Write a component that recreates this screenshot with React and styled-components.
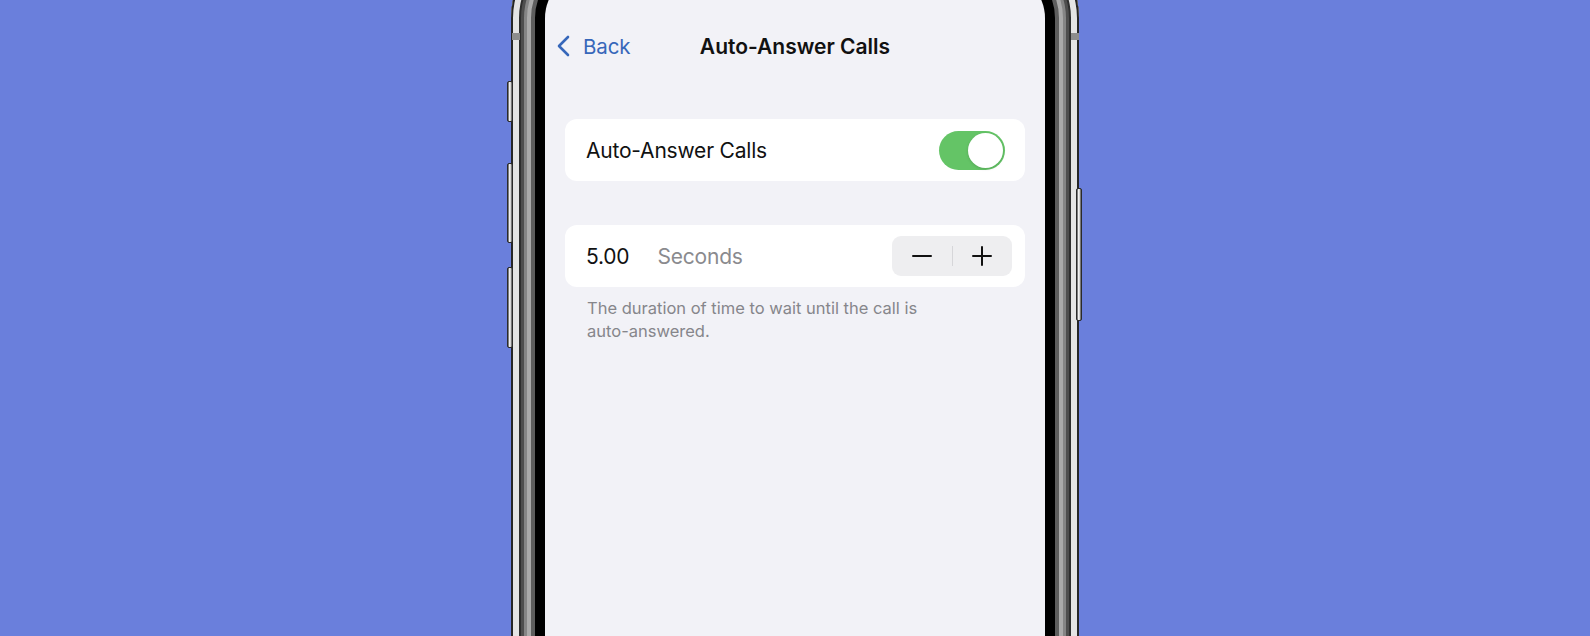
import React, { useState } from "react";
import styled, { createGlobalStyle } from "styled-components";

const Global = createGlobalStyle`
  html, body {
    margin: 0;
    padding: 0;
    background: #6a7fdc;
    overflow: hidden;
  }
  * { box-sizing: border-box; }
`;

const Stage = styled.div`
  width: 1590px;
  height: 636px;
  overflow: hidden;
  display: flex;
  justify-content: center;
  background: #6a7fdc;
  font-family: Inter, "Noto Sans", sans-serif;
`;

const Phone = styled.div`
  position: relative;
  flex: none;
  width: 568px;
  height: 920px;
  margin-top: -62px;
  padding: 34px;
  border-radius: 80px;
  background: #000;
  box-shadow:
    inset 0 0 0 2px #262626,
    inset 0 0 0 8px #e4e4e4,
    inset 0 0 0 10px #2e2e2e,
    inset 0 0 0 13px #4e4e4e,
    inset 0 0 0 16px #858585,
    inset 0 0 0 20px #aaaaaa,
    inset 0 0 0 24px #5e5e5e,
    inset 0 0 0 34px #000;
`;

/* hardware buttons on the rim */
const SideButton = styled.div`
  position: absolute;
  width: 6px;
  top: ${(p) => p.$top}px;
  height: ${(p) => p.$h}px;
  ${(p) => (p.$side === "left" ? "left: -4px;" : "right: -3px;")}
  background: linear-gradient(90deg, #3a3a3a, #f2f2f2 35%, #cfcfcf 70%, #3a3a3a);
  border-radius: 2px;
  border: 1px solid #2a2a2a;
`;

const AntennaBand = styled.div`
  position: absolute;
  top: 95px;
  width: 8px;
  height: 7px;
  ${(p) => (p.$side === "left" ? "left: 1px;" : "right: 0px;")}
  background: #8d8d8d;
`;

const Screen = styled.div`
  width: 100%;
  height: 100%;
  border-radius: 46px;
  background: #f2f2f7;
  overflow: hidden;
  display: flex;
  flex-direction: column;
`;

const StatusBar = styled.div`
  height: 52px;
  flex: none;
`;

const NavBar = styled.div`
  height: 44px;
  flex: none;
  display: grid;
  grid-template-columns: 1fr auto 1fr;
  align-items: center;
`;

const BackButton = styled.button`
  justify-self: start;
  display: flex;
  align-items: center;
  gap: 13px;
  padding: 0 0 0 11px;
  border: none;
  background: none;
  color: #3767ba;
  font-family: inherit;
  font-size: 20.5px;
  font-weight: 400;
  letter-spacing: -0.1px;
  cursor: pointer;
`;

const Title = styled.h1`
  margin: 0;
  font-size: 21px;
  font-weight: 600;
  color: #111;
  letter-spacing: 0px;
`;

const Content = styled.div`
  padding: 51px 20px 0;
  display: flex;
  flex-direction: column;
`;

const Card = styled.div`
  height: 62px;
  background: #fff;
  border-radius: 12px;
  display: flex;
  align-items: center;
  justify-content: space-between;
  padding: 0 ${(p) => p.$padRight ?? 20}px 0 21px;
  margin-top: ${(p) => p.$gap ?? 0}px;
`;

const Label = styled.span`
  font-size: 21px;
  color: #111;
  letter-spacing: -0.2px;
`;

const ValueGroup = styled.div`
  display: flex;
  align-items: center;
  gap: 28px;
`;

const Value = styled.span`
  font-size: 21px;
  color: #111;
  letter-spacing: -0.2px;
`;

const Unit = styled.span`
  font-size: 21px;
  color: #8a8a8e;
  letter-spacing: -0.2px;
`;

const Toggle = styled.button`
  position: relative;
  width: 66px;
  height: 39px;
  border: none;
  padding: 0;
  border-radius: 20px;
  background: ${(p) => (p.$on ? "#64c466" : "#e4e4e8")};
  cursor: pointer;
`;

const Knob = styled.span`
  position: absolute;
  top: 2px;
  left: ${(p) => (p.$on ? 29 : 2)}px;
  width: 35px;
  height: 35px;
  border-radius: 50%;
  background: #fff;
  box-shadow: 0 1px 3px rgba(0, 0, 0, 0.15);
`;

const Stepper = styled.div`
  width: 120px;
  height: 40px;
  border-radius: 9px;
  background: #eeeef0;
  display: flex;
  align-items: center;
`;

const StepButton = styled.button`
  flex: 1;
  height: 100%;
  border: none;
  background: none;
  display: flex;
  align-items: center;
  justify-content: center;
  padding: 0;
  cursor: pointer;
`;

const StepDivider = styled.span`
  width: 1px;
  height: 20px;
  background: #d6d6d9;
`;

const Footer = styled.p`
  margin: 10px 0 0;
  padding: 0 22px;
  font-size: 16.5px;
  line-height: 22.5px;
  color: #86868b;
  letter-spacing: 0px;
`;

const Chevron = () => (
  <svg width="14" height="22" viewBox="0 0 14 22" fill="none">
    <path d="M12 2 L3 11 L12 20" stroke="#3767ba" strokeWidth="2.6" strokeLinecap="round" strokeLinejoin="round" />
  </svg>
);

const MinusIcon = () => (
  <svg width="22" height="22" viewBox="0 0 22 22">
    <path d="M2 11 H20" stroke="#111" strokeWidth="2" strokeLinecap="round" />
  </svg>
);

const PlusIcon = () => (
  <svg width="22" height="22" viewBox="0 0 22 22">
    <path d="M2 11 H20 M11 2 V20" stroke="#111" strokeWidth="2" strokeLinecap="round" />
  </svg>
);

export default function App() {
  const [on, setOn] = useState(true);
  const [secs, setSecs] = useState(5);

  return (
    <>
      <Global />
      <Stage>
        <Phone>
          <AntennaBand $side="left" />
          <AntennaBand $side="right" />
          <SideButton $side="left" $top={143} $h={41} />
          <SideButton $side="left" $top={225} $h={80} />
          <SideButton $side="left" $top={329} $h={81} />
          <SideButton $side="right" $top={250} $h={133} />
          <Screen>
            <StatusBar />
            <NavBar>
              <BackButton>
                <Chevron />
                Back
              </BackButton>
              <Title>Auto-Answer Calls</Title>
              <span />
            </NavBar>
            <Content>
              <Card>
                <Label>Auto-Answer Calls</Label>
                <Toggle $on={on} onClick={() => setOn(!on)} aria-label="Auto-Answer Calls">
                  <Knob $on={on} />
                </Toggle>
              </Card>
              <Card $gap={44} $padRight={13}>
                <ValueGroup>
                  <Value>{secs.toFixed(2)}</Value>
                  <Unit>Seconds</Unit>
                </ValueGroup>
                <Stepper>
                  <StepButton onClick={() => setSecs(Math.max(0, secs - 1))} aria-label="Decrease">
                    <MinusIcon />
                  </StepButton>
                  <StepDivider />
                  <StepButton onClick={() => setSecs(secs + 1)} aria-label="Increase">
                    <PlusIcon />
                  </StepButton>
                </Stepper>
              </Card>
              <Footer>
                The duration of time to wait until the call is
                <br />
                auto-answered.
              </Footer>
            </Content>
          </Screen>
        </Phone>
      </Stage>
    </>
  );
}
